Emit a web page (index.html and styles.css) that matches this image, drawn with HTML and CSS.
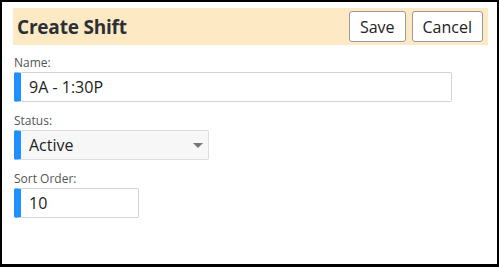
FILE: index.html
```html
<!DOCTYPE html>
<html lang="en">
  <head>
    <meta charset="UTF-8" />
    <meta name="viewport" content="width=device-width, initial-scale=1.0" />
    <title>Create Shift</title>
    <link rel="stylesheet" href="styles.css">
  </head>
  <body>
    <div class="dialog">
      <div class="dialog-header">
        <h1>Create Shift</h1>
        <div class="actions">
          <button>Save</button>
          <button>Cancel</button>
        </div>
      </div>

      <div class="form">
        <div class="field">
          <label>Name:</label>
          <div class="input wide">9A - 1:30P</div>
        </div>
        <div class="field">
          <label>Status:</label>
          <div class="input select">
            Active
            <span class="caret"></span>
          </div>
        </div>
        <div class="field">
          <label>Sort Order:</label>
          <div class="input short">10</div>
        </div>
      </div>
    </div>
  </body>
</html>
```

FILE: styles.css
```css
html, body {
  margin: 0;
  padding: 0;
  background: #fff;
}
.dialog {
  width: 499px;
  height: 267px;
  box-sizing: border-box;
  border: 2px solid #000;
  border-bottom-width: 3px;
  padding: 6px 9px 0 11px;
  font-family: "Open Sans", sans-serif;
  color: #222;
}
.dialog-header {
  display: flex;
  align-items: center;
  justify-content: space-between;
  height: 37px;
  background: #fde9c4;
  padding: 0 5px 0 4px;
}
.dialog-header h1 {
  margin: 0;
  font-size: 19px;
  font-weight: 700;
  color: #2b2f36;
  letter-spacing: -0.2px;
}
.actions {
  display: flex;
  gap: 6px;
}
button {
  font-family: "Open Sans", sans-serif;
  font-size: 16px;
  height: 31px;
  padding: 0 10px;
  background: #fff;
  color: #222;
  border: 1px solid #9a9a9a;
  border-radius: 3px;
}
.form {
  padding: 9px 0 0 1px;
}
.field {
  margin-bottom: 10px;
}
.field label {
  display: block;
  font-size: 12px;
  color: #555;
  line-height: 17px;
  height: 18px;
}
.input {
  position: relative;
  box-sizing: border-box;
  height: 30px;
  border: 1px solid #d4d4d4;
  border-left: 7px solid #1e90ff;
  border-radius: 2px;
  padding-left: 8px;
  font-size: 16px;
  line-height: 28px;
  color: #222;
}
.input.wide {
  width: 438px;
}
.input.short {
  width: 125px;
}
.input.select {
  width: 195px;
  background: #f7f7f7;
  border-color: #ddd;
  border-left-color: #1e90ff;
}
.caret {
  position: absolute;
  right: 5px;
  top: 12px;
  border-left: 5px solid transparent;
  border-right: 5px solid transparent;
  border-top: 5px solid #777;
}
```
